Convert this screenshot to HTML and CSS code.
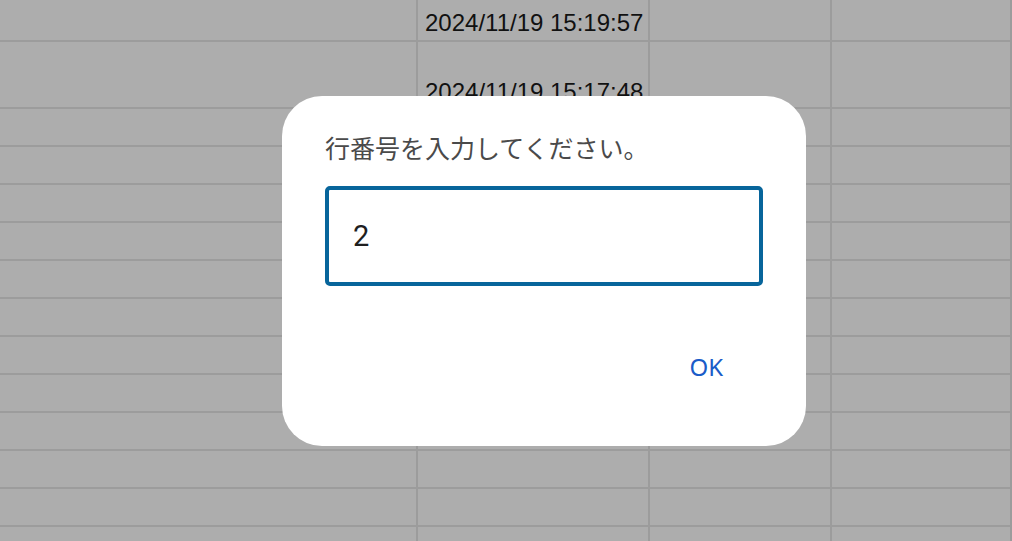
FILE: index.html
```html
<!DOCTYPE html>
<html lang="ja">
<head>
    <meta charset="UTF-8">
    <meta name="viewport" content="width=device-width, initial-scale=1.0">
    <title>行番号</title>
    <link rel="stylesheet" href="styles.css">
</head>
<body>

    <div class="sheet">
        <div class="cell"></div><div class="cell date top">2024/11/19 15:19:57</div><div class="cell"></div><div class="cell"></div>
        <div class="cell"></div><div class="cell date bottom">2024/11/19 15:17:48</div><div class="cell"></div><div class="cell"></div>
        <div class="cell"></div><div class="cell"></div><div class="cell"></div><div class="cell"></div>
        <div class="cell"></div><div class="cell"></div><div class="cell"></div><div class="cell"></div>
        <div class="cell"></div><div class="cell"></div><div class="cell"></div><div class="cell"></div>
        <div class="cell"></div><div class="cell"></div><div class="cell"></div><div class="cell"></div>
        <div class="cell"></div><div class="cell"></div><div class="cell"></div><div class="cell"></div>
        <div class="cell"></div><div class="cell"></div><div class="cell"></div><div class="cell"></div>
        <div class="cell"></div><div class="cell"></div><div class="cell"></div><div class="cell"></div>
        <div class="cell"></div><div class="cell"></div><div class="cell"></div><div class="cell"></div>
        <div class="cell"></div><div class="cell"></div><div class="cell"></div><div class="cell"></div>
        <div class="cell"></div><div class="cell"></div><div class="cell"></div><div class="cell"></div>
        <div class="cell"></div><div class="cell"></div><div class="cell"></div><div class="cell"></div>
        <div class="cell"></div><div class="cell"></div><div class="cell"></div><div class="cell"></div>
    </div>

    <div class="dialog">
        <p class="dialog-title">行番号を入力してください。</p>
        <input class="dialog-input" type="text" value="2">
        <div class="dialog-actions">
            <button class="ok-button">OK</button>
        </div>
    </div>

</body>
</html>
```

FILE: styles.css
```css
body {
    margin: 0;
    background-color: #adadad;
    font-family: "Liberation Sans", Arial, sans-serif;
    overflow: hidden;
}

.sheet {
    display: grid;
    grid-template-columns: 418px 232px 182px 1fr;
    grid-template-rows: 42px 67px repeat(12, 38px);
}

.cell {
    border-right: 2px solid #9c9c9c;
    border-bottom: 2px solid #9c9c9c;
}

.date {
    font-size: 24px;
    color: #111;
    padding-left: 7px;
    display: flex;
}

.date.top {
    align-items: center;
    padding-top: 6px;
}

.date.bottom {
    align-items: flex-end;
    padding-bottom: 1px;
}

.dialog {
    position: absolute;
    left: 282px;
    top: 96px;
    width: 524px;
    height: 350px;
    box-sizing: border-box;
    padding: 34px 43px 0 43px;
    background-color: #fff;
    border-radius: 40px;
    display: flex;
    flex-direction: column;
}

.dialog-title {
    margin: 0;
    font-family: "Noto Sans CJK JP", sans-serif;
    font-size: 25px;
    line-height: 34px;
    color: #4a4a4a;
}

.dialog-input {
    margin-top: 22px;
    height: 100px;
    box-sizing: border-box;
    border: 4px solid #07659b;
    border-radius: 5px;
    padding: 0 24px;
    font-family: Roboto, "Noto Sans", sans-serif;
    font-size: 29px;
    color: #1f1f1f;
    outline: none;
}

.dialog-actions {
    display: flex;
    justify-content: flex-end;
    margin-top: 58px;
}

.ok-button {
    background: none;
    border: none;
    padding: 6px 40px 8px 20px;
    font-family: "Noto Sans", sans-serif;
    font-size: 24px;
    color: #1a5cc8;
    cursor: pointer;
}
```
